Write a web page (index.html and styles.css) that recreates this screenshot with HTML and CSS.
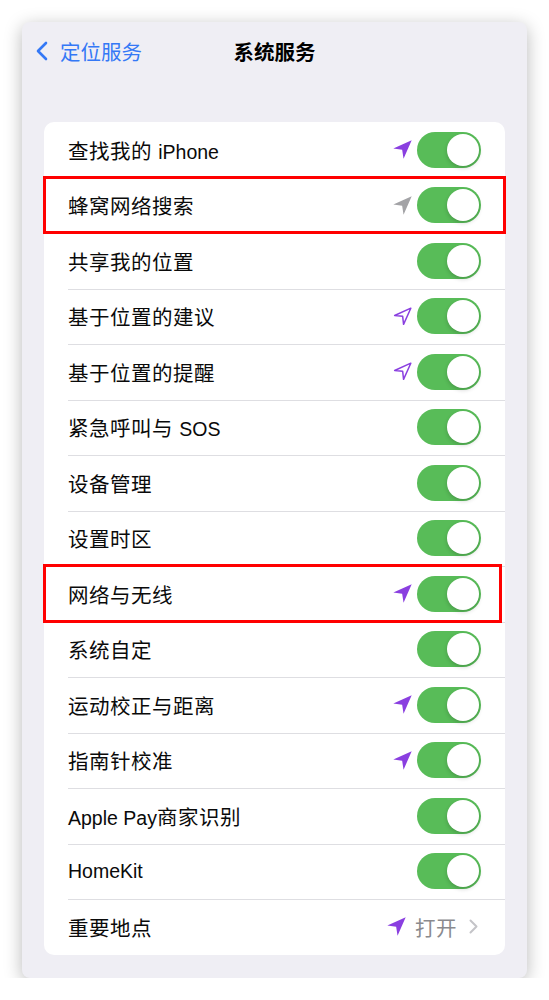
FILE: index.html
```html
<!DOCTYPE html>
<html lang="zh-CN">
<head>
  <meta charset="UTF-8" />
  <meta name="viewport" content="width=device-width, initial-scale=1.0">
  <title>系统服务</title>
  <link rel="stylesheet" href="styles.css">
</head>
<body>

  <div class="screen">
    <!-- Navigation bar -->
    <div class="nav">
      <div class="nav-back">
        <svg class="chevron" width="12" height="20" viewBox="0 0 12 20">
          <path d="M10 2 L2 10 L10 18" fill="none" stroke="#3478f6" stroke-width="2.6" stroke-linecap="round" stroke-linejoin="round"/>
        </svg>
        <span>定位服务</span>
      </div>
      <div class="nav-title">系统服务</div>
    </div>

    <!-- Settings list -->
    <ul class="list">
      <li class="row">
        <span class="label">查找我的 <span class="latin">iPhone</span></span>
        <span class="accessory">
          <svg class="arrow" viewBox="0 0 24 24"><path d="M22.5 1.5 L1.5 10.8 L11.6 12.4 L13.2 22.5 Z" fill="#8a3fe0"/></svg>
          <span class="toggle"></span>
        </span>
      </li>
      <li class="row marked">
        <span class="label">蜂窝网络搜索</span>
        <span class="accessory">
          <svg class="arrow" viewBox="0 0 24 24"><path d="M22.5 1.5 L1.5 10.8 L11.6 12.4 L13.2 22.5 Z" fill="#a3a3a6"/></svg>
          <span class="toggle"></span>
        </span>
      </li>
      <li class="row">
        <span class="label">共享我的位置</span>
        <span class="accessory"><span class="toggle"></span></span>
      </li>
      <li class="row">
        <span class="label">基于位置的建议</span>
        <span class="accessory">
          <svg class="arrow" viewBox="0 0 24 24"><path d="M21.5 2.5 L3 10.8 L12.2 11.8 L13.2 21 Z" fill="none" stroke="#8a3fe0" stroke-width="1.7" stroke-linejoin="round"/></svg>
          <span class="toggle"></span>
        </span>
      </li>
      <li class="row">
        <span class="label">基于位置的提醒</span>
        <span class="accessory">
          <svg class="arrow" viewBox="0 0 24 24"><path d="M21.5 2.5 L3 10.8 L12.2 11.8 L13.2 21 Z" fill="none" stroke="#8a3fe0" stroke-width="1.7" stroke-linejoin="round"/></svg>
          <span class="toggle"></span>
        </span>
      </li>
      <li class="row">
        <span class="label">紧急呼叫与 <span class="latin">SOS</span></span>
        <span class="accessory"><span class="toggle"></span></span>
      </li>
      <li class="row">
        <span class="label">设备管理</span>
        <span class="accessory"><span class="toggle"></span></span>
      </li>
      <li class="row">
        <span class="label">设置时区</span>
        <span class="accessory"><span class="toggle"></span></span>
      </li>
      <li class="row marked marked-narrow">
        <span class="label">网络与无线</span>
        <span class="accessory">
          <svg class="arrow" viewBox="0 0 24 24"><path d="M22.5 1.5 L1.5 10.8 L11.6 12.4 L13.2 22.5 Z" fill="#8a3fe0"/></svg>
          <span class="toggle"></span>
        </span>
      </li>
      <li class="row">
        <span class="label">系统自定</span>
        <span class="accessory"><span class="toggle"></span></span>
      </li>
      <li class="row">
        <span class="label">运动校正与距离</span>
        <span class="accessory">
          <svg class="arrow" viewBox="0 0 24 24"><path d="M22.5 1.5 L1.5 10.8 L11.6 12.4 L13.2 22.5 Z" fill="#8a3fe0"/></svg>
          <span class="toggle"></span>
        </span>
      </li>
      <li class="row">
        <span class="label">指南针校准</span>
        <span class="accessory">
          <svg class="arrow" viewBox="0 0 24 24"><path d="M22.5 1.5 L1.5 10.8 L11.6 12.4 L13.2 22.5 Z" fill="#8a3fe0"/></svg>
          <span class="toggle"></span>
        </span>
      </li>
      <li class="row">
        <span class="label"><span class="latin">Apple Pay</span>商家识别</span>
        <span class="accessory"><span class="toggle"></span></span>
      </li>
      <li class="row">
        <span class="label"><span class="latin">HomeKit</span></span>
        <span class="accessory"><span class="toggle"></span></span>
      </li>
      <li class="row">
        <span class="label">重要地点</span>
        <span class="accessory">
          <svg class="arrow arrow-last" viewBox="0 0 24 24"><path d="M22.5 1.5 L1.5 10.8 L11.6 12.4 L13.2 22.5 Z" fill="#8a3fe0"/></svg>
          <span class="value">打开</span>
          <svg class="disclosure" width="9" height="15" viewBox="0 0 9 15">
            <path d="M1.5 1.5 L7.5 7.5 L1.5 13.5" fill="none" stroke="#c4c4c8" stroke-width="2" stroke-linecap="round" stroke-linejoin="round"/>
          </svg>
        </span>
      </li>
    </ul>
  </div>

</body>
</html>
```

FILE: styles.css
```css
/* General reset */
html, body {
  margin: 0;
  padding: 0;
  background: #fff;
  font-family: "Liberation Sans", "Noto Sans CJK SC", sans-serif;
}

.screen {
  width: 505px;
  height: 956px;
  margin: 22px 0 0 22px;
  background: #efeef4;
  border-radius: 8px;
  box-shadow: 0 4px 18px rgba(0, 0, 0, 0.28);
  box-sizing: border-box;
  padding: 0 22px;
  overflow: hidden;
}

/* Navigation bar */
.nav {
  position: relative;
  height: 58px;
  display: flex;
  align-items: center;
  justify-content: center;
}

.nav-back {
  position: absolute;
  left: -8px;
  top: 0;
  height: 58px;
  display: flex;
  align-items: center;
  gap: 12px;
  color: #3478f6;
  font-size: 20.5px;
}

.nav-title {
  font-size: 20.5px;
  font-weight: bold;
  color: #000;
}

/* List */
.list {
  list-style: none;
  margin: 42px 0 0 0;
  padding: 0;
  background: #fff;
  border-radius: 10px;
}

.row {
  position: relative;
  height: 55.5px;
  display: flex;
  align-items: center;
  justify-content: space-between;
  padding: 0 24px;
  box-sizing: border-box;
}

.row + .row::before {
  content: "";
  position: absolute;
  top: 0;
  left: 24px;
  right: 0;
  border-top: 1px solid #dedee2;
}

.label {
  font-size: 20.5px;
  letter-spacing: 0.5px;
  color: #0a0a0a;
}

.latin {
  font-size: 19.5px;
  letter-spacing: 0;
}

.accessory {
  display: flex;
  align-items: center;
}

.arrow {
  width: 21px;
  height: 21px;
  margin-right: 4px;
}

.arrow-last {
  margin-right: 8px;
}

.value {
  font-size: 20.5px;
  color: #8a8a8e;
  letter-spacing: 0.5px;
  margin-right: 12px;
}

.disclosure {
  margin-right: 3px;
}

/* Switch */
.toggle {
  position: relative;
  display: block;
  width: 64px;
  height: 36px;
  border-radius: 18px;
  background: #58bc58;
}

.toggle::after {
  content: "";
  position: absolute;
  top: 2px;
  right: 2px;
  width: 32px;
  height: 32px;
  border-radius: 50%;
  background: #fff;
  box-shadow: 0 2px 4px rgba(0, 0, 0, 0.18);
}

/* Red annotation boxes */
.marked::after {
  content: "";
  position: absolute;
  top: -2px;
  bottom: -1px;
  left: -1px;
  right: -1px;
  border: 3px solid #ff0000;
  z-index: 2;
}

.marked-narrow::after {
  right: 3px;
}
```
